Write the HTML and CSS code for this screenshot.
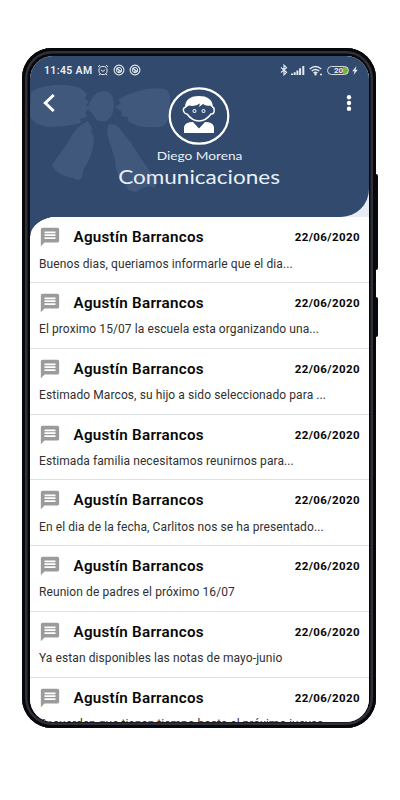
FILE: index.html
```html
<!DOCTYPE html>
<html lang="es">
<head>
<meta charset="utf-8">
<title>Comunicaciones</title>
<link rel="stylesheet" href="styles.css">
</head>
<body>
<svg width="0" height="0" class="defs">
  <symbol id="msg" viewBox="0 0 24 24"><path fill="#9b9b9b" d="M4 2h16c1.100 0 2 .9 2 2v12c0 1.100-.9 2-2 2H6l-4 4V4c0-1.100.9-2 2-2z"/><path stroke="#fff" stroke-width="1.900" d="M6 6.900h12M6 10h12M6 13.100h12"/></symbol>
  <symbol id="sync" viewBox="0 0 12 12"><g fill="none" stroke="#e4eaf2"><circle cx="6" cy="6" r="4.900" stroke-width="1.100"/><circle cx="6" cy="6" r="2.600" stroke-width="1"/><path stroke-width="1.300" d="M3.500 4 8.500 8M5 7.500l2 1"/></g></symbol>
</svg>
<div class="phone">
  <i class="key volume"></i><i class="key power"></i>
  <main class="screen">
    <header class="header">
      <svg class="bow" viewBox="0 0 339 161" fill="#40587b">
        <path d="M1 37C5 32 20 28 36 29Q49 30 54 35L57 38 55 42 59 46 56 49 59 52 55 57 57 61 50 63 51 67C40 70 25 71 17 71Q3 68 0 60Z"/>
        <path d="M57 52C61 46 62 36 74 35Q83 35 84 48Q84 61 76 65Q66 67 63 58Z"/>
        <path d="M85 51 91 47 88 44C101 36 122 29 137 34Q142 40 139 53Q140 72 126 71C110 72 104 69 98 65L98 61 91 60 92 56Z"/>
        <path d="M58 65 62 72 61 76 64 80C64 95 59 105 53 115L52 122Q48 126 43 122C35 121 25 117 22 109C27 100 35 92 40 83Q47 69 58 65Z"/>
        <path d="M78 69Q87 66 93 77L101 87C112 104 121 118 129 126L124 132 119 130 113 132 106 136 98 134 96 129Q86 121 85 105C83 94 78 84 77 76Z"/>
      </svg>
      <div class="status">
        <span class="clock">11:45 AM</span>
        <svg class="sic" viewBox="0 0 12 12" fill="none" stroke="#e4eaf2"><circle cx="6" cy="6.500" r="4.100"/><path d="M1 3 3 1M9 1l2 2M3 10l-1 1.300M9 10l1 1.300M4 6l2 1.400L8 5.800"/></svg>
        <svg class="sic"><use href="#sync"/></svg>
        <svg class="sic"><use href="#sync"/></svg>
        <span class="grow"></span>
        <svg class="bt" viewBox="0 0 8 12" fill="none" stroke="#e4eaf2" stroke-width="1.200"><path d="M1 3.500 6.500 8.300 4 10.800V1.200L6.500 3.700 1 8.500"/></svg>
        <svg class="signal" viewBox="0 0 14 10" stroke="#e4eaf2" stroke-width="2"><path d="M1 10V8.500M3.700 10V7.300M6.400 10V5.500M9.100 10V3.300M12.300 10V1"/></svg>
        <svg class="wifi" viewBox="0 0 14 11" fill="none" stroke="#e4eaf2" stroke-width="1.500"><path d="M.7 4Q6.500-1 12.300 4M2.700 6Q6.500 3 10.300 6M4.600 8Q6.500 6.500 8.400 8"/><circle cx="6.500" cy="9.300" r=".5"/><path d="M11 9.500h2"/></svg>
        <span class="battery">20</span>
        <svg class="bolt" viewBox="0 0 6 9" fill="#e4eaf2"><path d="M4.500 0 .2 5.200H2.600L1.500 9 5.800 3.700H3.500Z"/></svg>
      </div>
      <div class="nav">
        <svg class="back" viewBox="0 0 12 18" fill="none" stroke="#fff" stroke-width="2.900"><path d="M10.700 1 2.300 9l8.400 8"/></svg>
        <svg class="avatar" viewBox="0 0 62 58">
          <ellipse cx="31" cy="29" rx="29.300" ry="27.700" fill="none" stroke="#fff" stroke-width="2.200"/>
          <path fill="none" stroke="#fff" stroke-width="1.500" d="M18 20Q14 21 16 25Q17 27 19 27C22 31 26 34 31 34S40 31 43 27Q47 27 46 22Q46 20 44 20"/>
          <path fill="#fff" d="M17 21C17 12 23 9 31 9S45 12 45 21L42 18.500Q38 19.500 35 17L31 20 32 16.500Q27 20 21 18.500Z"/>
          <path fill="#fff" d="M16 46V40Q17 35 25 35L31 41.500 37 35Q45 35 46 40V46Z"/>
          <g fill="none" stroke="#e4eaf2" stroke-width="1.100"><circle cx="26.500" cy="24" r="1.500"/><circle cx="35.500" cy="24" r="1.500"/></g>
        </svg>
        <svg class="more" viewBox="0 0 6 16" fill="#fff"><circle cx="3" cy="2.300" r="2.200"/><circle cx="3" cy="8" r="2.200"/><circle cx="3" cy="13.700" r="2.200"/></svg>
      </div>
      <div class="name"><span>Diego Morena</span></div>
      <h1 class="title"><span>Comunicaciones</span></h1>
    </header>
    <section class="list">
      <article class="row"><div class="top"><svg class="msg"><use href="#msg"/></svg><b class="from">Agustín Barrancos</b><time>22/06/2020</time></div><p>Buenos dias, queriamos informarle que el dia...</p></article>
      <article class="row"><div class="top"><svg class="msg"><use href="#msg"/></svg><b class="from">Agustín Barrancos</b><time>22/06/2020</time></div><p>El proximo 15/07 la escuela esta organizando una...</p></article>
      <article class="row"><div class="top"><svg class="msg"><use href="#msg"/></svg><b class="from">Agustín Barrancos</b><time>22/06/2020</time></div><p>Estimado Marcos, su hijo a sido seleccionado para ...</p></article>
      <article class="row"><div class="top"><svg class="msg"><use href="#msg"/></svg><b class="from">Agustín Barrancos</b><time>22/06/2020</time></div><p>Estimada familia necesitamos reunirnos para...</p></article>
      <article class="row"><div class="top"><svg class="msg"><use href="#msg"/></svg><b class="from">Agustín Barrancos</b><time>22/06/2020</time></div><p>En el dia de la fecha, Carlitos nos se ha presentado...</p></article>
      <article class="row"><div class="top"><svg class="msg"><use href="#msg"/></svg><b class="from">Agustín Barrancos</b><time>22/06/2020</time></div><p>Reunion de padres el próximo 16/07</p></article>
      <article class="row"><div class="top"><svg class="msg"><use href="#msg"/></svg><b class="from">Agustín Barrancos</b><time>22/06/2020</time></div><p>Ya estan disponibles las notas de mayo-junio</p></article>
      <article class="row"><div class="top"><svg class="msg"><use href="#msg"/></svg><b class="from">Agustín Barrancos</b><time>22/06/2020</time></div><p>Recuerden que tienen tiempo hasta el próximo jueves</p></article>
    </section>
  </main>
</div>
</body>
</html>
```
FILE: styles.css
```css
* { box-sizing: border-box; }
body { margin: 0; height: 800px; overflow: hidden; background: #fff; font-family: Roboto, "Liberation Sans", sans-serif; }
.defs { display: block; }
.phone { position: relative; width: 354px; height: 680px; margin: 48px 0 0 22px; padding: 8px 7px 6px 8px; border-radius: 30px; background: #07080b; box-shadow: inset 0 0 0 3px #07080b, inset 0 0 0 5.500px #303138; }
.key { position: absolute; left: 353px; width: 3px; background: #08090c; border-radius: 0 2px 2px 0; }
.volume { top: 126px; height: 96px; }
.power { top: 249px; height: 40px; }
.screen { height: 666px; overflow: hidden; border-radius: 23px; background: #fff; }
.header { position: relative; height: 161.400px; background: #314a6d; border-radius: 0 0 28px 0; box-shadow: 30px 0 0 #e6ebf4; color: #e9eff6; }
.bow { position: absolute; left: 0; top: 0; width: 339px; height: 161px; }
.status { position: relative; display: flex; align-items: center; height: 28px; padding: 0 11px 0 14px; }
.clock { width: 48px; margin-right: 5px; font-size: 10.500px; font-weight: 600; letter-spacing: .35px; white-space: nowrap; }
.sic { width: 12px; height: 12px; margin-right: 4px; }
.grow { flex: 1; }
.bt { width: 8px; height: 12px; margin-right: 3px; }
.signal { width: 14px; height: 10px; margin-right: 4px; }
.wifi { width: 14px; height: 11px; margin-right: 4px; }
.battery { width: 22px; height: 9px; margin-right: 3px; padding-left: 6px; border: 1px solid #d5ddd9; border-radius: 5px; background: linear-gradient(90deg, transparent 74%, #76b43a 74%); font-size: 8px; font-weight: 700; line-height: 7.500px; }
.bolt { width: 6px; height: 9px; }
.nav { position: relative; display: grid; grid-template-columns: 12px 62px 6px; justify-content: space-between; height: 62px; padding: 3px 17px 0 13px; }
.back { width: 12px; height: 18px; margin-top: 7px; }
.avatar { width: 62px; height: 58px; margin-left: -1.500px; }
.more { width: 6px; height: 16px; margin-top: 8px; }
.name, .title { position: relative; margin: 0; text-align: center; font-family: Lato, sans-serif; font-weight: 400; white-space: nowrap; }
.name { height: 20px; font-size: 11.500px; line-height: 20px; }
.name span, .title span { display: inline-block; }
.name span { transform: translateX(-.5px) scaleX(1.190); }
.title { height: 22px; font-size: 19.500px; line-height: 21px; }
.title span { transform: scaleX(1.155); }
.list { position: relative; background: #fff; }
.list::before { content: ""; position: absolute; left: 0; top: -1px; width: 30px; height: 20px; background: radial-gradient(ellipse 30px 20px at 100% 100%, transparent 97%, #314a6d 100%); }
.row { height: 65.750px; padding: 8px 9px 0; border-bottom: 1px solid #dedfe2; }
.top { display: flex; align-items: center; height: 24px; }
.msg { width: 22px; height: 22px; margin-right: 12.500px; }
.from { flex: 1; color: #080808; font-size: 15.200px; font-weight: 600; letter-spacing: .26px; }
time { color: #080808; font-size: 11.500px; font-weight: 700; letter-spacing: .4px; }
.row p { margin: 6.300px 0 0; color: #303030; font-size: 12px; line-height: 17px; letter-spacing: .09px; white-space: nowrap; }
.row:last-child p { letter-spacing: 0; }
```
